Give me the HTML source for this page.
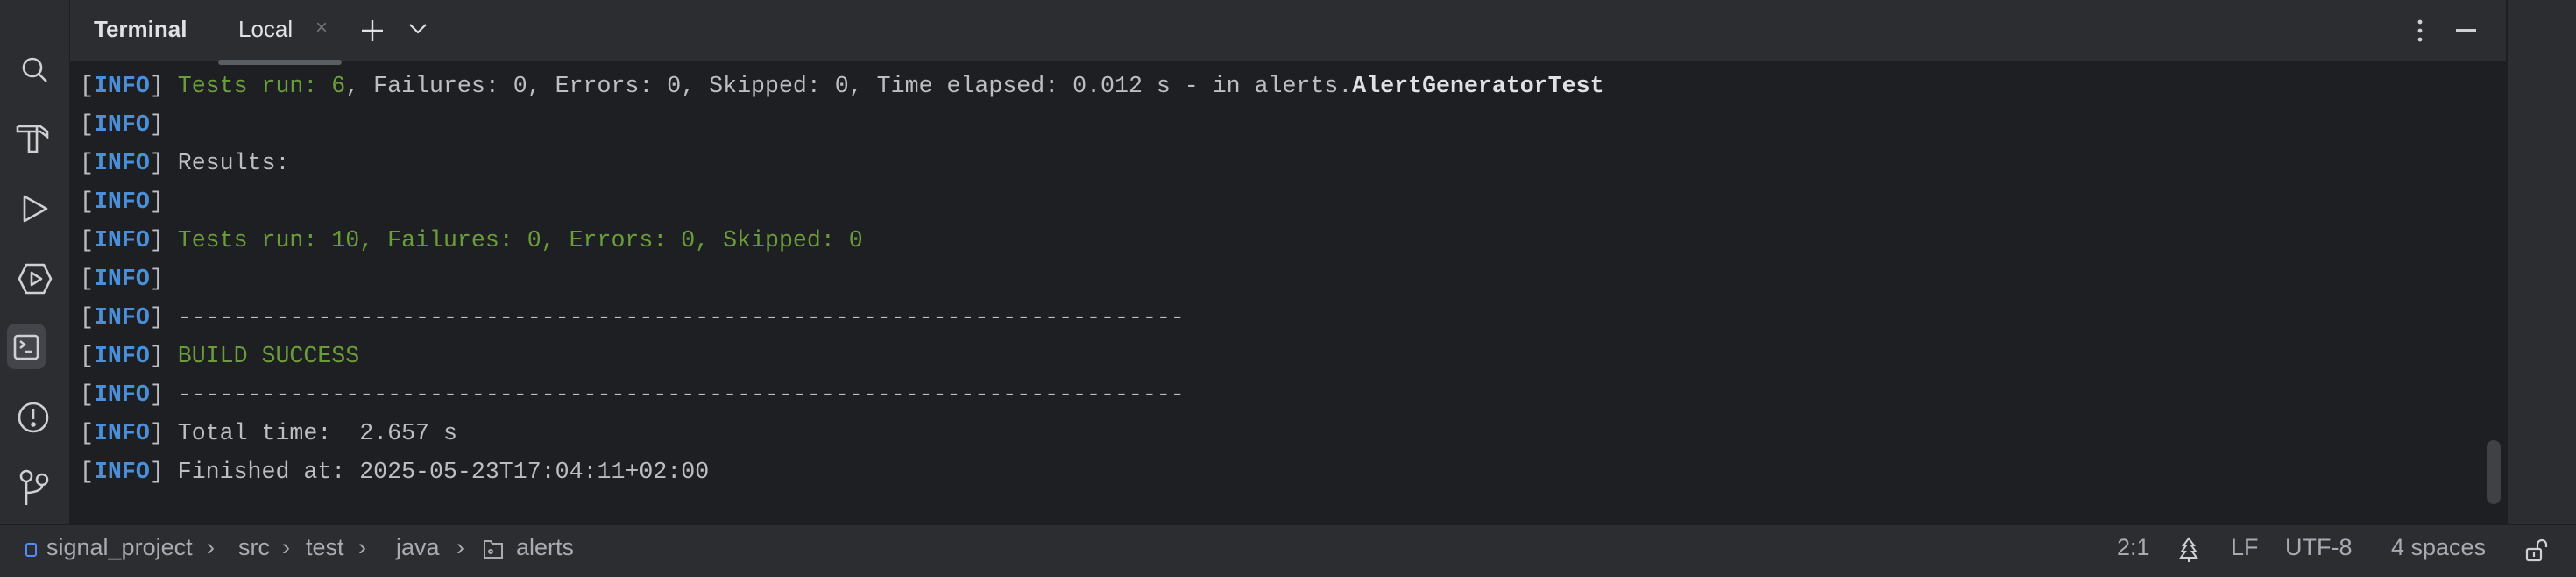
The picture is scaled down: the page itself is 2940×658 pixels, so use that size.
<!DOCTYPE html>
<html><head><meta charset="utf-8"><style>
*{margin:0;padding:0;box-sizing:border-box}
body{width:2940px;height:658px;background:#1e1f22;position:relative;overflow:hidden;font-family:"Liberation Sans",sans-serif}
.left{position:absolute;left:0;top:0;width:80px;height:598px;background:#2b2d30;border-right:1px solid #1e1f22}
.right{position:absolute;left:2860px;top:0;width:80px;height:598px;background:#2b2d30;border-left:2px solid #1e1f22}
.head{position:absolute;left:80px;top:0;width:2780px;height:70px;background:#2b2d30}
.status{position:absolute;left:0;top:598px;width:2940px;height:60px;background:#2b2d30;border-top:1px solid #1e1f22}
.t{position:absolute;white-space:pre;color:#dfe1e5;font-size:26px}
.term{position:absolute;left:91px;top:76px;font-family:"Liberation Mono",monospace;font-size:26.6px;line-height:44px;color:#bcbec4;white-space:pre}
.b{color:#4a8fd9;font-weight:bold}
.g{color:#6a9d3a}
.w{font-weight:bold;color:#dfe1e5}
.st{position:absolute;top:609px;font-size:27px;color:#a8abb2;white-space:pre}
svg{position:absolute}
</style></head><body>
<div class="left"></div>
<div class="right"></div>
<div class="head"></div>
<div class="status"></div>
<div class="t" style="left:107px;top:18px;font-weight:bold">Terminal</div>
<div class="t" style="left:272px;top:18px">Local</div>
<div class="t" style="left:360px;top:18px;color:#6f737a;font-size:24px">×</div>
<svg style="left:410px;top:20px" width="30" height="30" viewBox="0 0 30 30"><path d="M15 3V27M3 15H27" stroke="#dfe1e5" stroke-width="2.4"/></svg>
<svg style="left:466px;top:26px" width="22" height="14" viewBox="0 0 22 14"><path d="M2 2L11 11L20 2" stroke="#dfe1e5" stroke-width="2.2" fill="none"/></svg>
<div style="position:absolute;left:249px;top:68px;width:141px;height:6px;border-radius:3px;background:#5a5d63"></div>
<svg style="left:2756px;top:22px" width="12" height="26"><circle cx="6" cy="3" r="2.4" fill="#ced0d6"/><circle cx="6" cy="13" r="2.4" fill="#ced0d6"/><circle cx="6" cy="23" r="2.4" fill="#ced0d6"/></svg>
<div style="position:absolute;left:2803px;top:33px;width:23px;height:3px;background:#ced0d6"></div>
<svg style="left:20px;top:60px" width="40" height="40" viewBox="0 0 40 40" fill="none" stroke="#ced0d6" stroke-width="2.6"><circle cx="17" cy="17" r="10"/><path d="M24 24L33 33"/></svg>
<svg style="left:16px;top:136px" width="44" height="44" viewBox="0 0 44 44" fill="none" stroke="#ced0d6" stroke-width="2.6"><path d="M4 8H30L38 14V20L30 14H26V8M17 14H26V37H17Z"/><path d="M4 8V14H17"/></svg>
<svg style="left:20px;top:218px" width="40" height="40" viewBox="0 0 40 40" fill="none" stroke="#ced0d6" stroke-width="2.6" stroke-linejoin="round"><path d="M8 6V34L33 20Z"/></svg>
<svg style="left:18px;top:298px" width="44" height="40" viewBox="0 0 44 40" fill="none" stroke="#ced0d6" stroke-width="2.6" stroke-linejoin="round"><path d="M12 4H32L40 20L32 36H12L4 20Z"/><path d="M18 13V27L29 20Z"/></svg>
<div style="position:absolute;left:8px;top:369px;width:44px;height:52px;background:#43454a;border-radius:9px"></div>
<svg style="left:14px;top:380px" width="32" height="32" viewBox="0 0 32 32" fill="none" stroke="#ced0d6" stroke-width="2.6"><rect x="3" y="3" width="26" height="26" rx="3"/><path d="M9 9L14 13L9 17M15 21H22"/></svg>
<svg style="left:18px;top:456px" width="40" height="40" viewBox="0 0 40 40" fill="none" stroke="#ced0d6" stroke-width="2.6"><circle cx="20" cy="20" r="16"/><path d="M20 10V22"/><circle cx="20" cy="28" r="1.5" fill="#ced0d6"/></svg>
<svg style="left:18px;top:534px" width="40" height="44" viewBox="0 0 40 44" fill="none" stroke="#ced0d6" stroke-width="2.6"><circle cx="12" cy="9" r="6"/><circle cx="30" cy="13" r="6"/><path d="M12 15V42M30 19C30 28 12 28 12 28"/></svg>
<div class="term"><span>[<span class="b">INFO</span>] <span class="g">Tests run: 6</span>, Failures: 0, Errors: 0, Skipped: 0, Time elapsed: 0.012 s - in alerts.<span class="w">AlertGeneratorTest</span></span>
[<span class="b">INFO</span>]
[<span class="b">INFO</span>] Results:
[<span class="b">INFO</span>]
[<span class="b">INFO</span>] <span class="g">Tests run: 10, Failures: 0, Errors: 0, Skipped: 0</span>
[<span class="b">INFO</span>]
[<span class="b">INFO</span>] ------------------------------------------------------------------------
[<span class="b">INFO</span>] <span class="g">BUILD SUCCESS</span>
[<span class="b">INFO</span>] ------------------------------------------------------------------------
[<span class="b">INFO</span>] Total time:  2.657 s
[<span class="b">INFO</span>] Finished at: 2025-05-23T17:04:11+02:00</div>
<div style="position:absolute;left:2838px;top:502px;width:16px;height:73px;border-radius:8px;background:#404144"></div>
<div style="position:absolute;left:29px;top:619px;width:13px;height:16px;border:2.4px solid #548af7;border-radius:3px"></div>
<div class="st" style="left:53px">signal_project</div>
<div class="st" style="left:236px">›</div>
<div class="st" style="left:272px">src</div>
<div class="st" style="left:322px">›</div>
<div class="st" style="left:349px">test</div>
<div class="st" style="left:409px">›</div>
<div class="st" style="left:452px">java</div>
<div class="st" style="left:521px">›</div>
<svg style="left:551px;top:614px" width="24" height="24" viewBox="0 0 24 24" fill="none" stroke="#a8abb2" stroke-width="2"><path d="M2 3H9L11 6H22V22H2Z"/><circle cx="9" cy="15" r="2"/></svg>
<div class="st" style="left:589px">alerts</div>
<div class="st" style="left:2416px">2:1</div>
<svg style="left:2487px;top:612px" width="22" height="30" viewBox="0 0 22 30" fill="#ced0d6"><path d="M11 2L5 10H8L3 17H7L2 24H20L15 17H19L14 10H17Z" fill="none" stroke="#ced0d6" stroke-width="2"/><rect x="10" y="24" width="3" height="5"/></svg>
<div class="st" style="left:2546px">LF</div>
<div class="st" style="left:2608px">UTF-8</div>
<div class="st" style="left:2729px">4 spaces</div>
<svg style="left:2882px;top:614px" width="26" height="28" viewBox="0 0 26 28" fill="none" stroke="#ced0d6" stroke-width="2.2"><rect x="2" y="12" width="16" height="13" rx="2"/><path d="M10 16V21M14 12V7A5 5 0 0 1 24 7V10"/></svg>
</body></html>
